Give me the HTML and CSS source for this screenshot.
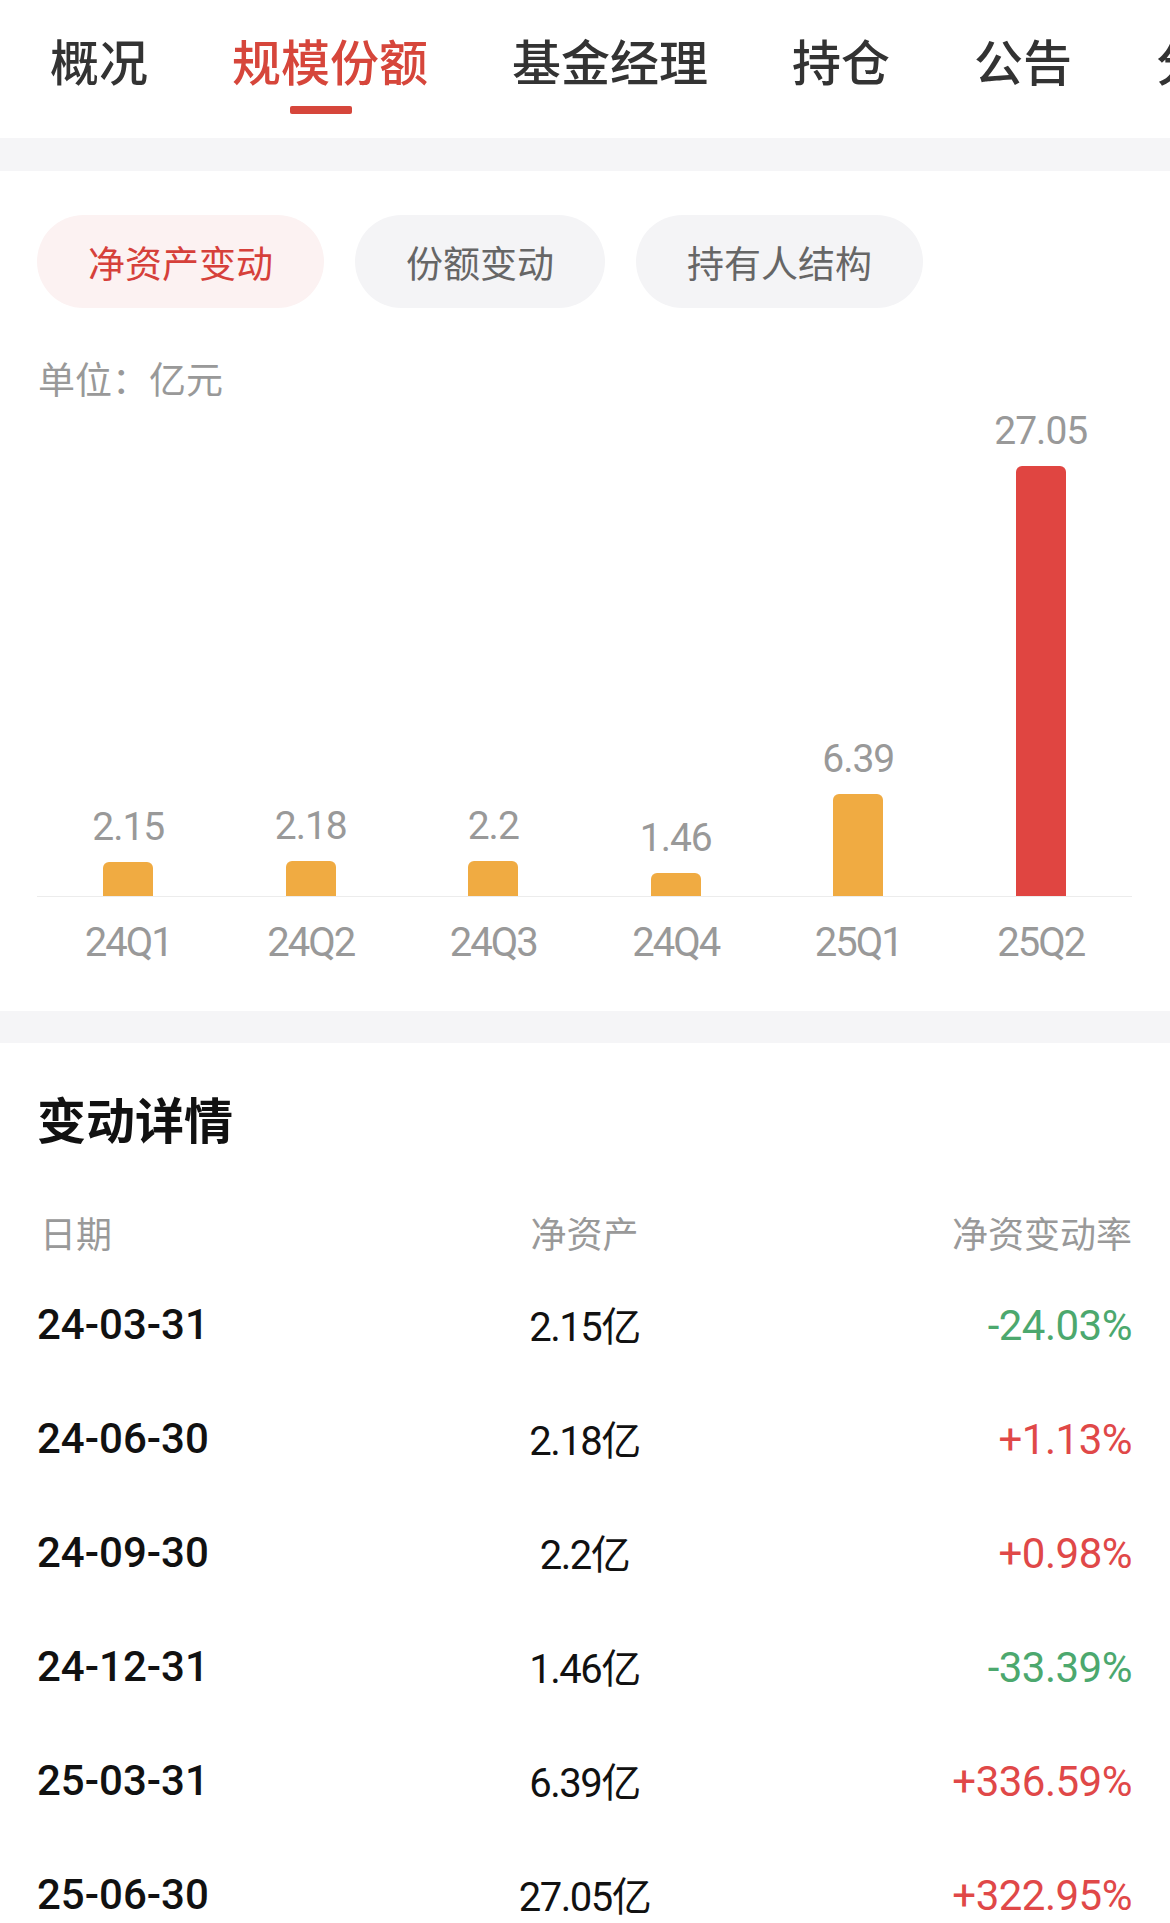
FILE: index.html
```html
<!DOCTYPE html>
<html lang="zh-CN">
<head>
<meta charset="utf-8">
<title>规模份额</title>
<link rel="stylesheet" href="styles.css">
</head>
<body>
<nav class="tabs">
  <div class="tab"><span class="tab-label">概况</span></div>
  <div class="tab active"><span class="tab-label">规模份额</span><span class="tab-line"></span></div>
  <div class="tab"><span class="tab-label">基金经理</span></div>
  <div class="tab"><span class="tab-label">持仓</span></div>
  <div class="tab"><span class="tab-label">公告</span></div>
  <div class="tab"><span class="tab-label">分红配送</span></div>
</nav>
<div class="band band-top"></div>
<section class="chart-panel">
  <div class="chips">
    <span class="chip active">净资产变动</span>
    <span class="chip">份额变动</span>
    <span class="chip">持有人结构</span>
  </div>
  <div class="unit">单位：亿元</div>
  <div class="chart">
    <div class="plot">
      <div class="col"><span class="val">2.15</span><div class="bar" style="height:34px"></div></div>
      <div class="col"><span class="val">2.18</span><div class="bar" style="height:35px"></div></div>
      <div class="col"><span class="val">2.2</span><div class="bar" style="height:35px"></div></div>
      <div class="col"><span class="val">1.46</span><div class="bar" style="height:23px"></div></div>
      <div class="col"><span class="val">6.39</span><div class="bar" style="height:102px"></div></div>
      <div class="col"><span class="val">27.05</span><div class="bar bar-hi" style="height:430px"></div></div>
    </div>
    <div class="xaxis">
      <span>24Q1</span><span>24Q2</span><span>24Q3</span><span>24Q4</span><span>25Q1</span><span>25Q2</span>
    </div>
  </div>
</section>
<div class="band band-mid"></div>
<section class="detail">
  <h2 class="detail-title">变动详情</h2>
  <div class="thead">
    <span class="c-date">日期</span>
    <span class="c-val">净资产</span>
    <span class="c-pct">净资变动率</span>
  </div>
  <div class="row">
    <span class="c-date date">24-03-31</span>
    <span class="c-val val-cell">2.15亿</span>
    <span class="c-pct down">-24.03%</span>
  </div>
  <div class="row">
    <span class="c-date date">24-06-30</span>
    <span class="c-val val-cell">2.18亿</span>
    <span class="c-pct up">+1.13%</span>
  </div>
  <div class="row">
    <span class="c-date date">24-09-30</span>
    <span class="c-val val-cell">2.2亿</span>
    <span class="c-pct up">+0.98%</span>
  </div>
  <div class="row">
    <span class="c-date date">24-12-31</span>
    <span class="c-val val-cell">1.46亿</span>
    <span class="c-pct down">-33.39%</span>
  </div>
  <div class="row">
    <span class="c-date date">25-03-31</span>
    <span class="c-val val-cell">6.39亿</span>
    <span class="c-pct up">+336.59%</span>
  </div>
  <div class="row">
    <span class="c-date date">25-06-30</span>
    <span class="c-val val-cell">27.05亿</span>
    <span class="c-pct up">+322.95%</span>
  </div>
</section>
</body>
</html>
```
FILE: styles.css
```css
* { box-sizing: border-box; }
html, body {
  margin: 0;
  padding: 0;
  background: #ffffff;
}
body {
  width: 1170px;
  overflow: hidden;
  font-family: Roboto, "Noto Sans CJK SC", "Noto Sans", sans-serif;
  color: #111;
}

/* ---------- tabs ---------- */
.tabs {
  display: flex;
  gap: 84px;
  height: 138px;
  padding-left: 50px;
  white-space: nowrap;
  overflow: hidden;
}
.tab {
  display: flex;
  flex-direction: column;
  align-items: center;
  flex-shrink: 0;
  padding-top: 30px;
}
.tab-label {
  font-family: "Noto Sans CJK SC", sans-serif;
  font-size: 49px;
  line-height: 60px;
  font-weight: 500;
  color: #333;
}
.tab.active .tab-label {
  color: #d6463b;
}
.tab-line {
  width: 62px;
  height: 8px;
  margin-top: 16px;
  margin-right: 18px;
  border-radius: 2px;
  background: #d6463b;
}

.band {
  background: #f5f5f7;
}
.band-top { height: 33px; }
.band-mid { height: 32px; }

/* ---------- chart panel ---------- */
.chart-panel {
  padding: 44px 38px 48px 37px;
}
.chips {
  display: flex;
  gap: 31px;
}
.chip {
  height: 93px;
  padding: 0 51px;
  border-radius: 47px;
  display: flex;
  align-items: center;
  font-family: "Noto Sans CJK SC", sans-serif;
  font-size: 37px;
  color: #666;
  background: #f4f4f6;
}
.chip.active {
  color: #d6403a;
  background: #fcf2f2;
}
.unit {
  margin-top: 50px;
  font-family: "Noto Sans CJK SC", sans-serif;
  font-size: 37px;
  line-height: 40px;
  color: #999;
  padding-left: 1px;
}
.plot {
  display: grid;
  grid-template-columns: repeat(6, 1fr);
  align-items: end;
  height: 499px;
  border-bottom: 1px solid #ececec;
}
.col {
  display: flex;
  flex-direction: column;
  align-items: center;
}
.val {
  font-size: 39px;
  line-height: 39px;
  letter-spacing: -1px;
  color: #999;
  margin-bottom: 15px;
}
.bar {
  width: 50px;
  border-radius: 6px 6px 0 0;
  background: #f0ab42;
}
.bar-hi {
  background: #e04541;
}
.xaxis {
  display: grid;
  grid-template-columns: repeat(6, 1fr);
  padding-top: 26px;
}
.xaxis span {
  text-align: center;
  font-size: 40px;
  line-height: 40px;
  letter-spacing: -2px;
  color: #999;
}

/* ---------- detail ---------- */
.detail {
  padding: 50px 38px 0 37px;
}
.detail-title {
  margin: 0;
  font-family: "Noto Sans CJK SC", sans-serif;
  font-size: 49px;
  line-height: 49px;
  font-weight: 700;
  color: #111;
}
.thead {
  display: grid;
  grid-template-columns: 1fr auto 1fr;
  margin-top: 72px;
  margin-bottom: 18px;
  font-family: "Noto Sans CJK SC", sans-serif;
  font-size: 36px;
  line-height: 36px;
  color: #999;
}
.thead .c-date { padding-left: 3px; }
.row {
  display: grid;
  grid-template-columns: 1fr auto 1fr;
  align-items: center;
  height: 114px;
}
.c-date { text-align: left; }
.c-val { text-align: center; }
.c-pct { text-align: right; }
.date {
  font-size: 42px;
  line-height: 42px;
  font-weight: 500;
  color: #111;
}
.val-cell {
  font-size: 40px;
  line-height: 42px;
  letter-spacing: -1.5px;
  color: #111;
  padding-top: 6px;
}
.c-pct.up, .c-pct.down {
  font-size: 42px;
  line-height: 42px;
  letter-spacing: -0.5px;
  padding-top: 2px;
}
.up { color: #e04848; }
.down { color: #4ca86e; }
```
